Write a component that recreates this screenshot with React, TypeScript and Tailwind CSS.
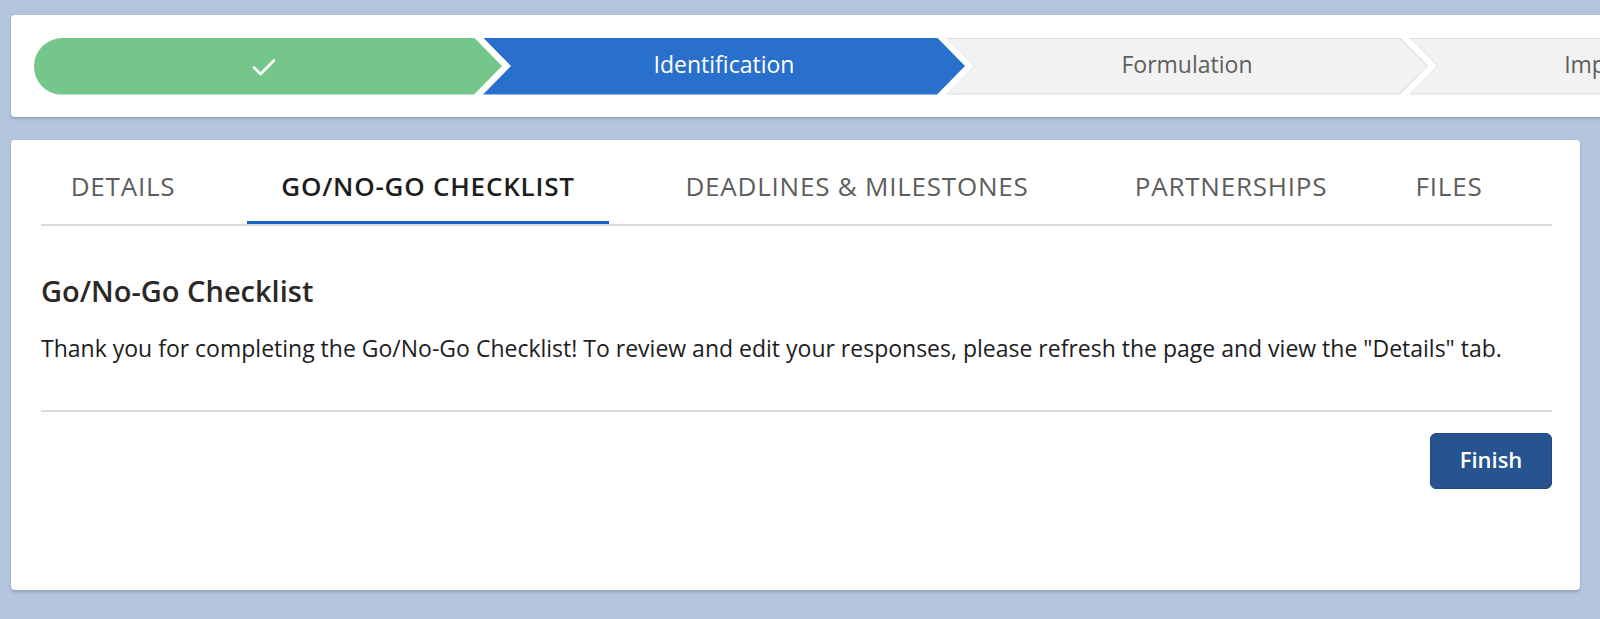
const steps = [
  { label: 'Identification', state: 'current' },
  { label: 'Formulation', state: 'todo' },
  { label: 'Implementation', state: 'todo' },
]

const tabs = [
  { label: 'DETAILS', w: 'w-[164px]', ml: 'ml-0' },
  { label: 'GO/NO-GO CHECKLIST', w: 'w-[362px]', ml: 'ml-[42px]', active: true },
  { label: 'DEADLINES & MILESTONES', w: 'w-[410px]', ml: 'ml-[43px]' },
  { label: 'PARTNERSHIPS', w: 'w-[252px]', ml: 'ml-[43px]' },
  { label: 'FILES', w: 'w-[156px]', ml: 'ml-[14px]' },
]

const chevron = '[clip-path:polygon(0_0,calc(100%-28px)_0,100%_50%,calc(100%-28px)_100%,0_100%,28px_50%)]'

export default function App() {
  return (
    <div className="min-h-screen w-full overflow-hidden bg-[#b4c5de] pt-[15px] font-['Open_Sans',sans-serif]">
      {/* path */}
      <div className="ml-[11px] flex h-[102px] w-[1700px] items-center rounded bg-white pl-[23px] shadow-[0_2px_3px_rgba(0,0,0,0.18)]">
        <div className="flex h-[57px] w-[468px] shrink-0 items-center justify-center rounded-l-full bg-[#75c68a] pr-[9px] [clip-path:polygon(0_0,calc(100%-28px)_0,100%_50%,calc(100%-28px)_100%,0_100%)]">
          <svg width="24" height="18" viewBox="0 0 24 18" fill="none" className="mt-[2px]">
            <path d="M2 9.5 L8.5 16 L22 2.5" stroke="white" strokeWidth="2.6" strokeLinecap="round" strokeLinejoin="round" />
          </svg>
        </div>
        {steps.map((step) =>
          step.state === 'current' ? (
            <div
              key={step.label}
              className={`-ml-[19px] flex h-[57px] w-[482px] shrink-0 items-center justify-center bg-[#2870cb] pb-[4px] text-[23px] text-white ${chevron}`}
            >
              {step.label}
            </div>
          ) : (
            <div key={step.label} className={`-ml-[19px] h-[57px] w-[482px] shrink-0 bg-[#dcdcdc] p-px ${chevron}`}>
              <div className={`flex h-full w-full items-center justify-center bg-[#f2f2f2] pb-[4px] text-[23px] text-[#5e5e5e] ${chevron}`}>
                {step.label}
              </div>
            </div>
          ),
        )}
      </div>

      {/* main card */}
      <div className="ml-[11px] mt-[23px] h-[450px] w-[1569px] rounded bg-white pl-[30px] pr-[28px] shadow-[0_2px_3px_rgba(0,0,0,0.18)]">
        <div className="flex border-b-2 border-[#dddbda]">
          {tabs.map((tab) => (
            <div
              key={tab.label}
              className={`${tab.w} ${tab.ml} flex h-[84px] shrink-0 items-center justify-center border-b-[3px] pt-[12px] text-[26px] tracking-[0.03em] ${
                tab.active ? 'border-[#1b64c6] font-semibold text-[#1d1d1d]' : 'border-transparent text-[#5d5d5d]'
              }`}
            >
              {tab.label}
            </div>
          ))}
        </div>

        <h2 className="mt-[47px] text-[29px] leading-[36px] font-semibold text-[#2b2826]">Go/No-Go Checklist</h2>
        <p className="mt-[23px] text-[23px] leading-[32px] text-[#1d1d1d]">
          Thank you for completing the Go/No-Go Checklist! To review and edit your responses, please refresh the page and
          view the "Details" tab.
        </p>
        <div className="mt-[46px] border-t-2 border-[#dddbda]" />
        <div className="mt-[21px] flex justify-end">
          <button className="h-[56px] w-[122px] rounded-md border border-[#1f4a85] bg-[#27548f] pb-[3px] text-[22px] font-semibold text-white">
            Finish
          </button>
        </div>
      </div>
    </div>
  )
}
